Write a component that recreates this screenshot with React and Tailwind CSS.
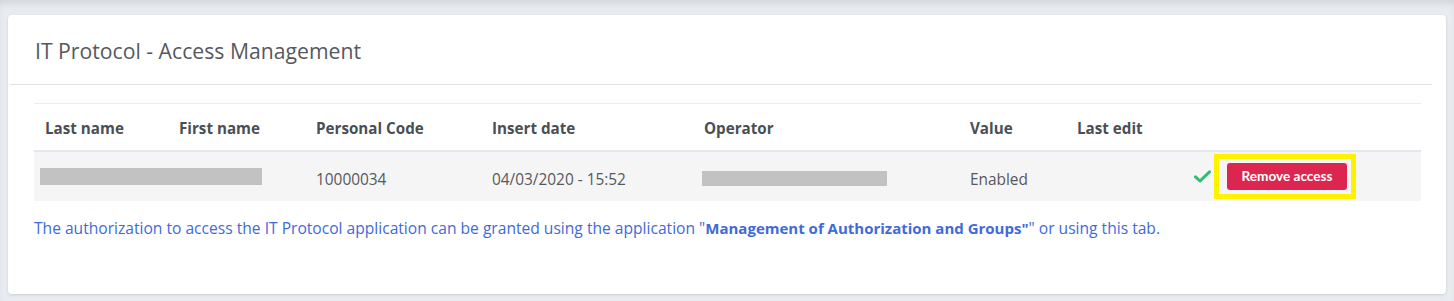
import React from 'react';

const columns = [
  { label: 'Last name', width: 'w-[134px]' },
  { label: 'First name', width: 'w-[137px]' },
  { label: 'Personal Code', width: 'w-[176px]' },
  { label: 'Insert date', width: 'w-[212px]' },
  { label: 'Operator', width: 'w-[266px]' },
  { label: 'Value', width: 'w-[107px]' },
  { label: 'Last edit', width: 'w-[116px]' },
  { label: '', width: '' },
];

const CheckIcon = () => (
  <svg width="17" height="13" viewBox="0 0 17 13" className="inline-block">
    <path d="M1.5 6.8 L6 11 L15.5 1.8" fill="none" stroke="#2fbf71" strokeWidth="3" strokeLinecap="round" strokeLinejoin="round" />
  </svg>
);

const App = () => {
  return (
    <div className="w-[1454px] h-[301px] bg-[#e8ebef] pt-[15px] px-[8px] font-['Open_Sans',sans-serif] shadow-[inset_0_6px_8px_-4px_rgba(0,0,0,0.12)]">
      <div className="w-[1438px] h-[279px] bg-white rounded-[4px] shadow-[0_1px_3px_rgba(0,0,0,0.12)]">
        <div className="h-[70px] ml-[2px] mr-[14px] border-b border-[#dfe3ec] flex items-center pl-[25px] pt-[2px]">
          <h1 className="text-[21.2px] text-[#55595e] leading-none">IT Protocol - Access Management</h1>
        </div>

        <div className="pl-[26px] pr-[25px] pt-[18px]">
          <table className="w-full border-collapse">
            <thead>
              <tr className="border-t border-[#e9ecef] border-b-2 border-b-[#e4e8ee]">
                {columns.map((col, i) => (
                  <th
                    key={i}
                    className={`${col.width} h-[47px] px-[11px] pt-[3px] text-left text-[15.2px] font-bold text-[#4a4f55]`}
                  >
                    {col.label}
                  </th>
                ))}
              </tr>
            </thead>
            <tbody>
              <tr className="bg-[#f5f5f5] h-[50px] text-[15.4px] text-[#55595e]">
                <td colSpan={2} className="px-[6px]">
                  <div className="w-[222px] h-[17px] bg-[#c2c2c2]"></div>
                </td>
                <td className="px-[11px] pt-[7px]">10000034</td>
                <td className="px-[11px] pt-[7px]">04/03/2020 - 15:52</td>
                <td className="px-[9px]">
                  <div className="w-[185px] h-[15px] bg-[#c2c2c2] mt-[4px]"></div>
                </td>
                <td className="px-[11px] pt-[7px]">Enabled</td>
                <td className="px-[11px]"></td>
                <td className="pl-[12px]">
                  <div className="flex items-center">
                    <CheckIcon />
                    <div className="ml-[3px] border-[5px] border-[#fff200] pl-[8px] pr-[4px] py-[4px]">
                      <button className="w-[120px] h-[27px] rounded-[3px] bg-[#dc2650] text-white text-[13.6px] font-bold font-['Lato',sans-serif]">
                        Remove access
                      </button>
                    </div>
                  </div>
                </td>
              </tr>
            </tbody>
          </table>

          <p className="mt-[16px] text-[15.6px] text-[#3f6ad8]">
            The authorization to access the IT Protocol application can be granted using the application "
            <span className="font-bold text-[15px]">Management of Authorization and Groups"</span>" or using this tab.
          </p>
        </div>
      </div>
    </div>
  );
};

export default App;
